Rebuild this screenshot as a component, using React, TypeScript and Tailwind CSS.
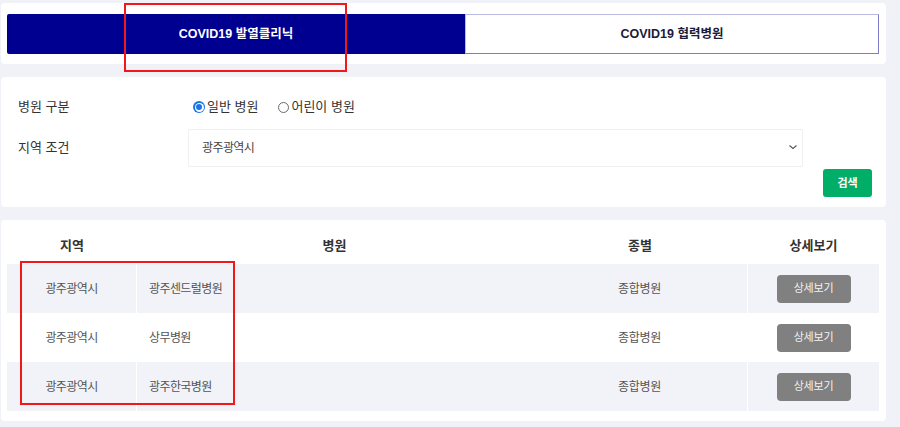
import React, { useState } from 'react';

interface Hospital {
  region: string;
  name: string;
  kind: string;
}

const hospitals: Hospital[] = [
  { region: '광주광역시', name: '광주센드럴병원', kind: '종합병원' },
  { region: '광주광역시', name: '상무병원', kind: '종합병원' },
  { region: '광주광역시', name: '광주한국병원', kind: '종합병원' },
];

function Radio({ checked, label, onClick }: { checked: boolean; label: string; onClick: () => void }) {
  return (
    <button onClick={onClick} className="flex items-center gap-[2px]">
      {checked ? (
        <span className="flex h-[12px] w-[12px] items-center justify-center rounded-full bg-[#1a73e8]">
          <span className="flex h-[9px] w-[9px] items-center justify-center rounded-full bg-white">
            <span className="h-[6px] w-[6px] rounded-full bg-[#1a73e8]" />
          </span>
        </span>
      ) : (
        <span className="h-[11px] w-[11px] rounded-full border border-[#6b6b6b]" />
      )}
      <span className="text-[13px] text-[#333]">{label}</span>
    </button>
  );
}

export default function App() {
  const [tab, setTab] = useState(0);
  const [type, setType] = useState(0);

  return (
    <div
      className="relative min-h-[427px] w-[900px] bg-[#f1f1f8] pt-[3px]"
      style={{ fontFamily: '"Liberation Sans", "Noto Sans CJK KR", sans-serif' }}
    >
      {/* Tabs */}
      <div className="ml-px w-[885px] rounded-[4px] bg-white pb-[10px] pl-[6px] pr-[7px] pt-[11px]">
        <div className="flex h-[40px]">
          <button
            onClick={() => setTab(0)}
            className={`w-[458px] rounded-l-[2px] text-[12.5px] font-bold ${tab === 0 ? 'bg-[#000090] text-white' : 'bg-white text-[#1b1b3a]'}`}
          >
            COVID19 발열클리닉
          </button>
          <button
            onClick={() => setTab(1)}
            className={`flex-1 border border-[#b9b9e2] border-b-[#7c7cc8] border-r-[#7c7cc8] text-[12.5px] font-bold ${tab === 1 ? 'bg-[#000090] text-white' : 'bg-white text-[#1b1b3a]'}`}
          >
            COVID19 협력병원
          </button>
        </div>
      </div>

      {/* Search form */}
      <div className="ml-px mt-[13px] w-[885px] rounded-[4px] bg-white pb-[10px] pl-[17px] pr-[14px] pt-[20px]">
        <div className="flex h-[20px] items-center">
          <div className="w-[170px] text-[13px] text-[#333]">병원 구분</div>
          <div className="flex items-center gap-[20px] pl-[5px]">
            <Radio checked={type === 0} label="일반 병원" onClick={() => setType(0)} />
            <Radio checked={type === 1} label="어린이 병원" onClick={() => setType(1)} />
          </div>
        </div>
        <div className="mt-[12px] flex items-center">
          <div className="w-[170px] text-[13px] text-[#333]">지역 조건</div>
          <div className="flex h-[38px] w-[615px] items-center justify-between rounded-[2px] border border-[#f0f0f0] pl-[13px] pr-[4px]">
            <span className="text-[12px] tracking-[-0.6px] text-[#444]">광주광역시</span>
            <svg width="12" height="12" viewBox="0 0 12 12" className="mt-[-2px] mr-[-1px]">
              <polyline points="2.5,4.5 6,7.5 9.5,4.5" fill="none" stroke="#555" strokeWidth="1.1" />
            </svg>
          </div>
        </div>
        <div className="mt-[2px] flex justify-end">
          <button className="h-[28px] w-[49px] rounded-[3px] bg-[#00ae68] text-[11px] font-bold text-white">검색</button>
        </div>
      </div>

      {/* Result table */}
      <div className="ml-px mt-[13px] w-[885px] rounded-[4px] bg-white pb-[10px] pl-[6px] pr-[7px] pt-[8px]">
        <div className="grid h-[36px] grid-cols-[130px_395px_216px_131px] items-center text-center text-[13px] font-bold text-[#333]">
          <div>지역</div>
          <div>병원</div>
          <div>종별</div>
          <div>상세보기</div>
        </div>
        {hospitals.map((h, i) => (
          <div
            key={i}
            className={`grid h-[49px] grid-cols-[130px_395px_216px_131px] items-center text-[12px] text-[#555] ${i % 2 === 0 ? 'bg-[#f2f3f8]' : 'bg-white'}`}
          >
            <div className="flex h-full items-center justify-center border-r border-white tracking-[-0.6px]">{h.region}</div>
            <div className="pl-[12px] tracking-[-0.6px]">{h.name}</div>
            <div className="flex h-full items-center justify-center border-r border-white tracking-[-0.3px]">{h.kind}</div>
            <div className="flex justify-center">
              <button className="h-[28px] w-[74px] rounded-[4px] bg-[#808080] text-[11px] tracking-[-0.2px] text-[#f2f2f2]">상세보기</button>
            </div>
          </div>
        ))}
      </div>

      {/* annotation boxes */}
      <div className="absolute left-[124px] top-[3px] h-[69px] w-[223px] border-2 border-[#f01818]" />
      <div className="absolute left-[20px] top-[261px] h-[144px] w-[215px] border-2 border-[#f01818]" />
    </div>
  );
}
